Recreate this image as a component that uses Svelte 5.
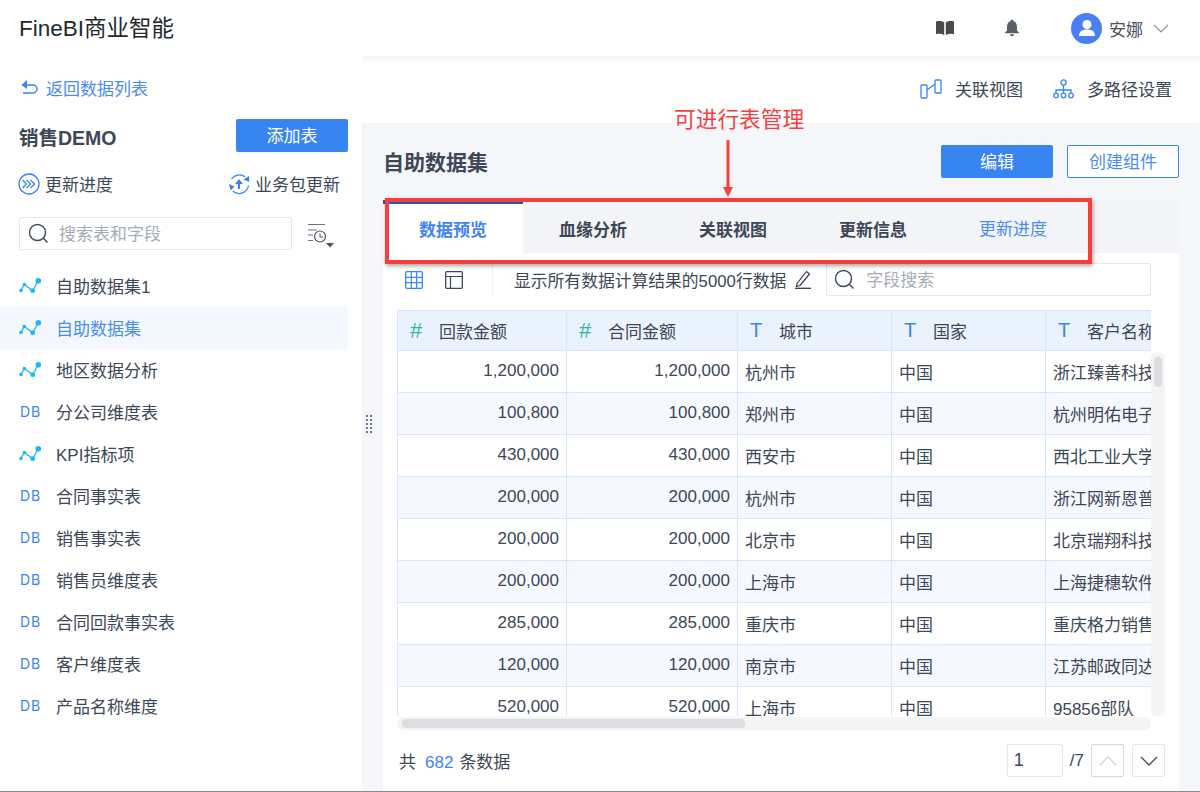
<script>
  const menu = [
    { name: "自助数据集1", type: "line" },
    { name: "自助数据集", type: "line", active: true },
    { name: "地区数据分析", type: "line" },
    { name: "分公司维度表", type: "db" },
    { name: "KPI指标项", type: "line" },
    { name: "合同事实表", type: "db" },
    { name: "销售事实表", type: "db" },
    { name: "销售员维度表", type: "db" },
    { name: "合同回款事实表", type: "db" },
    { name: "客户维度表", type: "db" },
    { name: "产品名称维度", type: "db" },
  ];

  const tabs = ["数据预览", "血缘分析", "关联视图", "更新信息", "更新进度"];

  const columns = [
    { icon: "#", name: "回款金额" },
    { icon: "#", name: "合同金额" },
    { icon: "T", name: "城市" },
    { icon: "T", name: "国家" },
    { icon: "T", name: "客户名称" },
  ];

  const rows = [
    ["1,200,000", "1,200,000", "杭州市", "中国", "浙江臻善科技"],
    ["100,800", "100,800", "郑州市", "中国", "杭州明佑电子"],
    ["430,000", "430,000", "西安市", "中国", "西北工业大学"],
    ["200,000", "200,000", "杭州市", "中国", "浙江网新恩普"],
    ["200,000", "200,000", "北京市", "中国", "北京瑞翔科技"],
    ["200,000", "200,000", "上海市", "中国", "上海捷穗软件"],
    ["285,000", "285,000", "重庆市", "中国", "重庆格力销售"],
    ["120,000", "120,000", "南京市", "中国", "江苏邮政同达"],
    ["520,000", "520,000", "上海市", "中国", "95856部队"],
  ];
</script>

<div class="app">
  <header class="topbar">
    <div class="logo">FineBI商业智能</div>
    <div class="top-actions">
      <svg class="book" width="20" height="16" viewBox="0 0 20 16">
        <path d="M1 1.500c3-.8 6-.6 8.200.8V15c-2.300-1.200-5.200-1.400-8.200-.8z" fill="#4a4a4a" />
        <path d="M19 1.500c-3-.8-6-.6-8.200.8V15c2.300-1.200 5.200-1.400 8.200-.8z" fill="#4a4a4a" />
      </svg>
      <svg class="bell" width="16" height="18" viewBox="0 0 16 18">
        <path d="M8 0.500a1.300 1.300 0 0 1 1.300 1.500C12 2.800 13 5 13 8v3.500l2 2v.8H1v-.8l2-2V8c0-3 1-5.200 3.700-6A1.300 1.300 0 0 1 8 .5z" fill="#5b5f66" />
        <path d="M6 15.300h4a2 2 0 0 1-4 0z" fill="#5b5f66" />
      </svg>
      <div class="user">
        <span class="avatar">
          <svg width="20" height="20" viewBox="0 0 20 20">
            <circle cx="10" cy="6.500" r="4.500" fill="#fff" />
            <path d="M2 18c0-4.500 3-6.500 8-6.500s8 2 8 6.500z" fill="#fff" />
          </svg>
        </span>
        <span class="user-name">安娜</span>
        <svg width="16" height="9" viewBox="0 0 16 9">
          <path d="M1 1l7 7 7-7" fill="none" stroke="#8c929c" stroke-width="1.200" />
        </svg>
      </div>
    </div>
  </header>

  <div class="body">
    <aside class="sidebar">
      <a class="back">
        <svg width="19" height="16" viewBox="0 0 19 16">
          <path d="M2 6h11a4 4 0 0 1 0 8H3" fill="none" stroke="#3a84f0" stroke-width="1.500" />
          <path d="M7 1v9L1.500 6z" fill="#3a84f0" />
        </svg>
        返回数据列表
      </a>
      <div class="package">
        <h2>销售DEMO</h2>
        <button class="btn primary add">添加表</button>
      </div>
      <div class="package-actions">
        <span class="action">
          <svg width="22" height="22" viewBox="0 0 22 22">
            <circle cx="11" cy="11" r="10" fill="none" stroke="#3a84f0" stroke-width="1.300" />
            <path d="M4.500 7l4 4-4 4M8.500 7l4 4-4 4M12.500 7l4 4-4 4" fill="none" stroke="#3a84f0" stroke-width="1.300" />
          </svg>
          <span class="action-text">更新进度</span>
        </span>
        <span class="action">
          <svg width="22" height="22" viewBox="0 0 22 22">
            <path d="M3.500 6A9.500 9.500 0 0 1 17 3.800" fill="none" stroke="#3a84f0" stroke-width="1.300" />
            <path d="M15.500 6.500L21 3l.3 6z" fill="#3a84f0" />
            <path d="M20.500 12.500A9.500 9.500 0 0 1 5 18.300" fill="none" stroke="#3a84f0" stroke-width="1.300" />
            <path d="M1 11l5.500 2.500-4 4z" fill="#3a84f0" />
            <path d="M7 11l4-5 4 5h-3v5h-2v-5z" fill="#3a84f0" />
          </svg>
          <span class="action-text">业务包更新</span>
        </span>
      </div>
      <div class="search-row">
        <div class="search side-search">
          <svg width="21" height="21" viewBox="0 0 21 21">
            <circle cx="9.500" cy="9.500" r="8" fill="none" stroke="#3d4a5c" stroke-width="1.400" />
            <path d="M15.300 15.300L19.500 19.500" stroke="#3d4a5c" stroke-width="1.500" />
          </svg>
          <span class="search-text">搜索表和字段</span>
        </div>
        <svg class="filter" width="28" height="24" viewBox="0 0 28 24">
          <path d="M1 .5h17M1 6h9M1 11h5M1 16.500h5" stroke="#6b7280" stroke-width="1.100" fill="none" />
          <circle cx="13" cy="12.500" r="5.500" fill="none" stroke="#4b5563" stroke-width="1.200" />
          <path d="M13 9.500v3.500h3" fill="none" stroke="#4b5563" stroke-width="1" />
          <path d="M19 19h8l-4 4.500z" fill="#4b5563" />
        </svg>
      </div>
      <ul class="menu">
        {#each menu as item}
          <li class:active={item.active}>
            {#if item.type === "line"}
              <svg class="menu-icon" width="22" height="16" viewBox="0 0 22 16">
                <path d="M2 12.500L5.300 6.500 13.700 12.700 19.300 2.500" fill="none" stroke="#1fb6f5" stroke-width="1.300" />
                <circle cx="2" cy="12.500" r="1.800" fill="#1fb6f5" />
                <circle cx="5.300" cy="6.500" r="1.800" fill="#1fb6f5" />
                <circle cx="13.700" cy="12.700" r="2.400" fill="#1fb6f5" />
                <circle cx="19.300" cy="2.800" r="2.800" fill="#1fb6f5" />
              </svg>
            {:else}
              <span class="menu-icon db">DB</span>
            {/if}
            <span class="menu-text">{item.name}</span>
          </li>
        {/each}
      </ul>
    </aside>

    <main class="main">
      <div class="main-tools">
        <span class="tool">
          <svg width="22" height="20" viewBox="0 0 22 20">
            <rect x="1" y="6" width="6" height="13" rx="1" fill="none" stroke="#3a84f0" stroke-width="1.300" />
            <rect x="15" y="1" width="6" height="13" rx="1" fill="none" stroke="#3a84f0" stroke-width="1.300" />
            <path d="M7 11l8-6" stroke="#3a84f0" stroke-width="1.300" />
          </svg>
          关联视图
        </span>
        <span class="tool">
          <svg width="21" height="20" viewBox="0 0 21 20">
            <circle cx="10.500" cy="3.500" r="2.600" fill="none" stroke="#3a84f0" stroke-width="1.300" />
            <circle cx="3" cy="16.500" r="2.300" fill="none" stroke="#3a84f0" stroke-width="1.300" />
            <circle cx="10.500" cy="16.500" r="2.300" fill="none" stroke="#3a84f0" stroke-width="1.300" />
            <circle cx="18" cy="16.500" r="2.300" fill="none" stroke="#3a84f0" stroke-width="1.300" />
            <path d="M10.500 6v8M3 14v-3h15v3" fill="none" stroke="#3a84f0" stroke-width="1.300" />
          </svg>
          多路径设置
        </span>
      </div>

      <section class="content">
        <div class="title-row">
          <h1>自助数据集</h1>
          <div class="title-actions">
            <button class="btn primary edit">编辑</button>
            <button class="btn outline">创建组件</button>
          </div>
        </div>

        <div class="panel">
          <div class="tabs">
            {#each tabs as tab, i}
              <div class="tab" class:selected={i === 0} class:link={i === 4}>{tab}</div>
            {/each}
          </div>

          <div class="toolbar">
            <svg class="view-icon" width="18" height="18" viewBox="0 0 18 18">
              <rect x="0.700" y="0.700" width="16.600" height="16.600" rx="1" fill="none" stroke="#3a84f0" stroke-width="1.300" />
              <path d="M6.300 1v16M11.700 1v16M1 6.300h16M1 11.700h16" stroke="#3a84f0" stroke-width="1.200" />
            </svg>
            <svg class="view-icon" width="18" height="18" viewBox="0 0 18 18">
              <rect x="0.700" y="0.700" width="16.600" height="16.600" rx="1" fill="none" stroke="#3d4a5c" stroke-width="1.300" />
              <path d="M1 5.500h16M5.500 5.500V17" stroke="#3d4a5c" stroke-width="1.200" />
            </svg>
            <span class="divider"></span>
            <span class="notice">显示所有数据计算结果的5000行数据</span>
            <svg class="pen" width="18" height="19" viewBox="0 0 18 19">
              <path d="M3 13.500L12.500 1.500l3 2.500L6 15.500l-3.500 1z" fill="none" stroke="#2f3a4a" stroke-width="1.200" />
              <path d="M1 18.300h16" stroke="#2f3a4a" stroke-width="1.300" />
            </svg>
            <div class="search field-search">
              <svg width="21" height="21" viewBox="0 0 21 21">
                <circle cx="9.500" cy="9.500" r="8" fill="none" stroke="#3d4a5c" stroke-width="1.400" />
                <path d="M15.300 15.300L19.500 19.500" stroke="#3d4a5c" stroke-width="1.500" />
              </svg>
              <span class="search-text">字段搜索</span>
            </div>
          </div>

          <div class="table-area">
            <div class="table">
              <div class="row head">
                {#each columns as col}
                  <div class="cell">
                    <span class="type" class:num={col.icon === "#"}>{col.icon}</span>
                    {col.name}
                  </div>
                {/each}
              </div>
              {#each rows as row, r}
                <div class="row" class:alt={r % 2 === 1}>
                  {#each row as value, c}
                    <div class="cell" class:right={c < 2}>{value}</div>
                  {/each}
                </div>
              {/each}
            </div>
            <div class="vbar"><i></i></div>
            <div class="hbar"><i></i></div>
          </div>

          <div class="pager">
            <div class="total">共<b>682</b>条数据</div>
            <div class="pages">
              <span class="page-input">1</span>
              <span class="page-count">/7</span>
              <button class="page-btn up" aria-label="上一页">
                <svg width="18" height="10" viewBox="0 0 18 10"><path d="M1 9l8-8 8 8" fill="none" stroke="#cfd4dc" stroke-width="1.300" /></svg>
              </button>
              <button class="page-btn" aria-label="下一页">
                <svg width="18" height="10" viewBox="0 0 18 10"><path d="M1 1l8 8 8-8" fill="none" stroke="#3d4a5c" stroke-width="1.300" /></svg>
              </button>
            </div>
          </div>
        </div>
      </section>
    </main>
  </div>

  <div class="handle">
    {#each Array(10) as _}<i></i>{/each}
  </div>

  <div class="callout">可进行表管理</div>
  <svg class="callout-arrow" width="14" height="58" viewBox="0 0 14 58">
    <path d="M7 1v48" stroke="#f53f3f" stroke-width="3" stroke-linecap="round" />
    <path d="M2 47h10l-5 10z" fill="#f53f3f" />
  </svg>
  <div class="callout-box"></div>
</div>

<style>
  :global(body) {
    margin: 0;
    background: #fff;
  }

  .app {
    position: relative;
    width: 1200px;
    height: 792px;
    overflow: hidden;
    display: flex;
    flex-direction: column;
    box-sizing: border-box;
    border-bottom: 1px solid #8a8a8a;
    font-family: "Liberation Sans", "Noto Sans CJK SC", sans-serif;
    font-size: 17px;
    color: #3d4757;
  }

  h1,
  h2 {
    margin: 0;
    font-weight: 700;
    color: #3d4757;
  }

  .topbar {
    flex: none;
    height: 56px;
    display: flex;
    align-items: center;
    justify-content: space-between;
    padding: 0 31px 0 19px;
    background: #fff;
  }

  .logo {
    font-size: 22.500px;
    margin-top: -4px;
    color: #23272e;
  }

  .top-actions {
    display: flex;
    align-items: center;
  }

  .book {
    margin-right: 49px;
  }

  .bell {
    margin-right: 51px;
  }

  .user {
    display: flex;
    align-items: center;
  }

  .avatar {
    width: 31px;
    height: 31px;
    border-radius: 50%;
    background: #4a80f5;
    display: flex;
    align-items: center;
    justify-content: center;
  }

  .user-name {
    margin: 0 10px 0 7px;
    color: #4a5260;
  }

  .body {
    flex: 1;
    min-height: 0;
    display: flex;
  }

  .sidebar {
    flex: none;
    box-sizing: border-box;
    width: 362px;
    padding-right: 14px;
    display: flex;
    flex-direction: column;
    background: #fff;
  }

  .back {
    display: flex;
    align-items: center;
    gap: 7px;
    margin: 19px 0 0 20px;
    height: 24px;
    color: #4a8cf0;
  }

  .package {
    display: flex;
    align-items: center;
    justify-content: space-between;
    margin-top: 20px;
    padding-left: 19px;
  }

  .package h2 {
    font-size: 19.500px;
    margin-top: 2px;
  }

  .btn {
    box-sizing: border-box;
    height: 33px;
    padding: 0 0 2px;
    border-radius: 2px;
    font: inherit;
    font-size: 17px;
    cursor: pointer;
  }

  .btn.primary {
    border: 0;
    background: #3884f0;
    color: #fff;
  }

  .btn.add,
  .btn.edit,
  .btn.outline {
    width: 112px;
  }

  .btn.outline {
    border: 1px solid #3884f0;
    background: #fff;
    color: #4a8cf0;
  }

  .package-actions {
    display: flex;
    justify-content: space-between;
    margin-top: 16px;
    padding: 0 8px 0 18px;
    height: 32px;
    align-items: center;
  }

  .action {
    display: flex;
    align-items: center;
    gap: 5px;
  }

  .action-text {
    margin-top: -2px;
  }

  .search-row {
    display: flex;
    align-items: flex-start;
    margin: 17px 0 0 19px;
  }

  .search {
    box-sizing: border-box;
    display: flex;
    align-items: center;
    height: 33px;
    border: 1px solid #e4e7ec;
    border-radius: 2px;
    background: #fff;
    color: #a6acb5;
  }

  .search-text {
    margin-top: -2px;
  }

  .side-search {
    width: 273px;
    padding-left: 8px;
    gap: 10px;
  }

  .filter {
    margin: 7px 0 0 15px;
  }

  .menu {
    list-style: none;
    margin: 15px 0 0;
    padding: 0;
  }

  .menu li {
    height: 42px;
    display: flex;
    align-items: center;
    padding-left: 19px;
    color: #3d4757;
  }

  .menu li.active {
    background: #f3f8ff;
    color: #4a8cf0;
  }

  .menu-icon {
    width: 22px;
    margin-right: 16px;
    flex: none;
  }

  .menu-text {
    margin: -2px 0 0 -1px;
  }

  .db {
    box-sizing: border-box;
    padding-left: 1px;
    font-family: "Inter", sans-serif;
    font-size: 14px;
    font-weight: 400;
    line-height: 1;
    letter-spacing: 1px;
    color: #3a84f0;
  }

  .main {
    flex: 1;
    min-width: 0;
    display: flex;
    flex-direction: column;
  }

  .main-tools {
    flex: none;
    box-sizing: border-box;
    height: 67px;
    padding: 0 28px 2px 0;
    display: flex;
    align-items: center;
    justify-content: flex-end;
    gap: 30px;
    background: #fff;
    box-shadow: inset 0 6px 6px -4px rgba(60, 70, 90, 0.08);
  }

  .tool {
    display: flex;
    align-items: center;
    gap: 13px;
    color: #3d4757;
  }

  .content {
    flex: 1;
    min-height: 0;
    display: flex;
    flex-direction: column;
    padding: 0 21px;
    background: #f5f6f9;
  }

  .title-row {
    flex: none;
    height: 77px;
    display: flex;
    align-items: center;
    justify-content: space-between;
  }

  .title-row h1 {
    font-size: 21px;
    margin-top: -2px;
  }

  .title-actions {
    display: flex;
    gap: 14px;
  }

  .panel {
    flex: 1;
    min-height: 0;
    display: flex;
    flex-direction: column;
    background: #fff;
  }

  .tabs {
    flex: none;
    display: flex;
    height: 53px;
    background: #f2f4f8;
  }

  .tab {
    box-sizing: border-box;
    width: 140px;
    display: flex;
    align-items: center;
    justify-content: center;
    border-top: 4px solid transparent;
    font-weight: 700;
    color: #3d4757;
  }

  .tab.selected {
    background: #fff;
    border-top-color: #2458a8;
    color: #3f84f2;
  }

  .tab.link {
    font-weight: 400;
    color: #4a8cf0;
    padding-bottom: 3px;
  }

  .toolbar {
    flex: none;
    height: 33px;
    display: flex;
    align-items: center;
    padding-left: 22px;
    margin-top: 10px;
    margin-bottom: 14px;
  }

  .view-icon {
    margin-right: 22px;
  }

  .divider {
    width: 1px;
    height: 30px;
    background: #f0f1f4;
    margin-left: 7px;
    margin-right: 21px;
  }

  .notice {
    color: #3d4757;
    font-size: 16.800px;
  }

  .pen {
    margin-left: 8px;
  }

  .field-search {
    width: 325px;
    margin-left: 14px;
    padding-left: 7px;
    gap: 11px;
  }

  .table-area {
    flex: none;
    display: grid;
    grid-template-columns: 754px 14px;
    grid-template-rows: 406px 14px;
    margin-left: 14px;
  }

  .table {
    overflow: hidden;
  }

  .row {
    display: grid;
    grid-template-columns: 169px 171px 154px 154px 160px;
    height: 42px;
    box-sizing: border-box;
    border-bottom: 1px solid #d7e6fb;
    border-left: 1px solid #d7e6fb;
  }

  .row.head {
    height: 41px;
    background: #eaf2fd;
    border-top: 1px solid #d7e6fb;
  }

  .row.alt {
    background: #f5f9ff;
  }

  .cell {
    display: flex;
    align-items: center;
    box-sizing: border-box;
    padding: 0 7px 1px;
    border-right: 1px solid #d7e6fb;
    white-space: nowrap;
    overflow: hidden;
    color: #3d4757;
  }

  .cell.right {
    justify-content: flex-end;
  }

  .head .cell {
    padding: 0 0 0 12px;
  }

  .type {
    width: 29px;
    flex: none;
    font-size: 20px;
    color: #3884f0;
  }

  .type.num {
    font-size: 22px;
    color: #2fb8a6;
  }

  .vbar {
    grid-column: 2;
    grid-row: 1;
    margin-top: 42px;
    background: #f4f4f5;
    border-radius: 6px;
    padding: 5px 3px 0;
  }

  .vbar i {
    display: block;
    height: 30px;
    border-radius: 4px;
    background: #dcdde0;
  }

  .hbar {
    grid-column: 1;
    grid-row: 2;
    box-sizing: border-box;
    height: 13px;
    margin-top: 1px;
    padding: 2px 5px;
    background: #f4f4f5;
    border-radius: 7px;
  }

  .hbar i {
    display: block;
    width: 343px;
    height: 9px;
    border-radius: 4px;
    background: #dcdde0;
  }

  .pager {
    flex: 1;
    display: flex;
    align-items: center;
    justify-content: space-between;
    padding: 0 14px 0 16px;
  }

  .total {
    margin-top: -1px;
  }

  .total b {
    font-weight: 400;
    color: #3f84f2;
    margin: 0 6px 0 9px;
  }

  .pages {
    display: flex;
    align-items: center;
  }

  .page-input {
    box-sizing: border-box;
    width: 56px;
    height: 33px;
    padding-left: 6px;
    border: 1px solid #e4e7ec;
    border-radius: 2px;
    display: flex;
    align-items: center;
    font-size: 18px;
  }

  .page-count {
    margin: 0 7px;
  }

  .page-btn {
    box-sizing: border-box;
    width: 33px;
    height: 33px;
    padding: 0;
    border: 1px solid #e4e7ec;
    border-radius: 2px;
    background: #fff;
    display: flex;
    align-items: center;
    justify-content: center;
  }

  .page-btn.up {
    border-color: #d3d6dc;
    margin-right: 8px;
  }

  .handle {
    position: absolute;
    left: 366px;
    top: 415px;
    display: grid;
    grid-template-columns: 2px 2px;
    grid-auto-rows: 2px;
    gap: 2px 2px;
  }

  .handle i {
    background: #6f7783;
  }

  .callout {
    position: absolute;
    left: 674px;
    top: 105px;
    font-size: 21.700px;
    line-height: 30px;
    color: #f53f3f;
  }

  .callout-arrow {
    position: absolute;
    left: 721px;
    top: 140px;
  }

  .callout-box {
    position: absolute;
    left: 385px;
    top: 198px;
    width: 707px;
    height: 66px;
    box-sizing: border-box;
    border: 4px solid #f53f3f;
    box-shadow: 1px 2px 4px rgba(0, 0, 0, 0.35);
  }
</style>
